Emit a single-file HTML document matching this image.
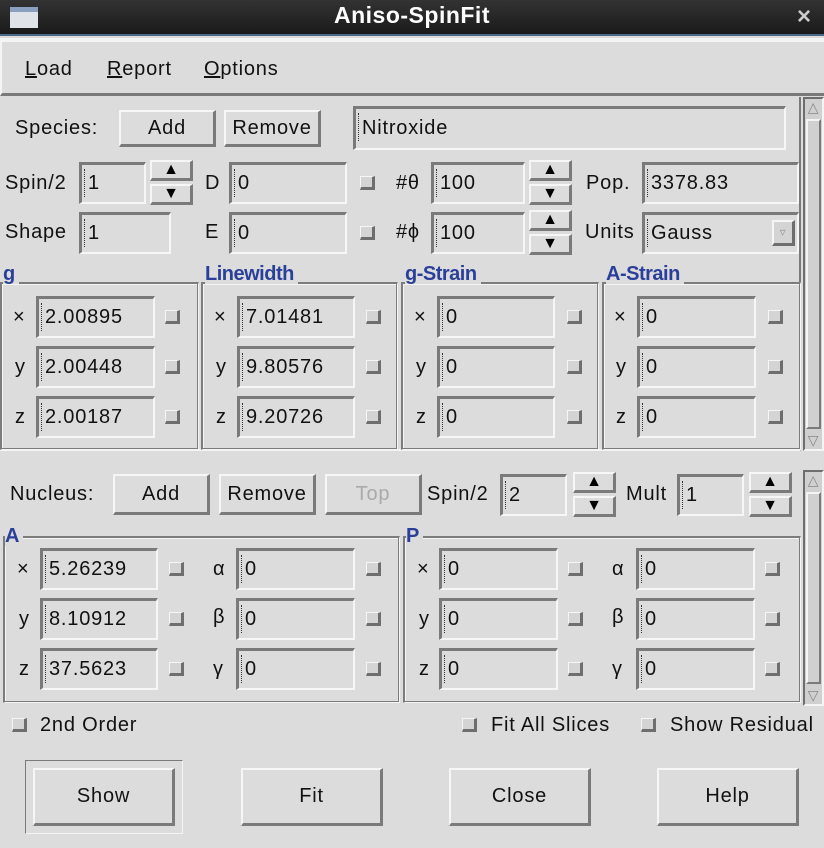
<!DOCTYPE html>
<html><head><meta charset="utf-8">
<style>
*{box-sizing:border-box;margin:0;padding:0}
body{width:824px;height:848px;overflow:hidden;background:#dcdcdc;font-family:"Liberation Sans","DejaVu Sans",sans-serif;font-size:20px;color:#111;position:relative;letter-spacing:0.8px}
div{position:absolute}
.t{background:linear-gradient(#333,#1a1a1a);left:0;top:0;width:824px;height:36px;border-bottom:2px solid #4a6a8a}
.f{border-style:solid;border-width:3px 2px 2px 3px;border-color:#7a7a7a #f6f6f6 #f6f6f6 #7a7a7a;height:42px;line-height:36px;padding-left:6px;white-space:nowrap;overflow:hidden}
.f:before{content:"";position:absolute;left:2px;top:4px;height:28px;border-left:1px dotted #333}
.b{border-style:solid;border-width:2px 3px 3px 2px;border-color:#f6f6f6 #7a7a7a #7a7a7a #f6f6f6;text-align:center;line-height:32px}
.c{width:15px;height:14px;border-style:solid;border-width:1px 3px 3px 1px;border-color:#f6f6f6 #6e6e6e #6e6e6e #f6f6f6;background:#d4d4d4}
.l{white-space:nowrap;line-height:24px}
.g{border-color:#7c7c7c #f4f4f4 #f4f4f4 #7c7c7c;border-style:solid;border-width:2px 1px 1px 2px;box-shadow:inset -1px -1px 0 #7c7c7c,inset 1px 1px 0 #f4f4f4}
.h{color:#2a3f9a;font-weight:bold;font-size:20px;background:#dcdcdc;padding-right:4px;line-height:20px;letter-spacing:-0.5px}
.ar{width:43px;height:21px;border-style:solid;border-width:2px 3px 3px 2px;border-color:#f6f6f6 #7a7a7a #7a7a7a #f6f6f6;text-align:center;font-size:16px;line-height:16px;color:#000;letter-spacing:0}
.sb{width:21px;border:2px solid;border-color:#6e6e6e #f4f4f4 #f4f4f4 #6e6e6e;background:#d0d0d0}
.sb div{left:1px;right:1px;top:20px;bottom:20px;border:2px solid;border-color:#f4f4f4 #7a7a7a #7a7a7a #f4f4f4}
.sb span{position:absolute;left:0;width:17px;text-align:center;font-size:14px;color:#888}
</style></head><body>
<div class="t"></div>
<div style="left:10px;top:7px;width:28px;height:21px;background:#e0e4e8;border-top:5px solid #8aa0c0"></div>
<div style="left:0;top:2px;width:824px;text-align:center;color:#fff;font-weight:bold;font-size:23px;letter-spacing:0.5px">Aniso-SpinFit</div>
<div style="left:797px;top:3px;color:#ccc;font-weight:bold;font-size:24px">×</div>
<div style="left:0;top:38px;width:824px;height:4px;background:#f4f4f4"></div>
<div style="left:0;top:42px;width:824px;height:54px;border-bottom:3px solid #7a7a7a;border-left:2px solid #f4f4f4"></div>
<div class="l" style="left:25px;top:57px"><u>L</u>oad</div>
<div class="l" style="left:107px;top:57px"><u>R</u>eport</div>
<div class="l" style="left:204px;top:57px"><u>O</u>ptions</div>

<div style="left:0;top:97px;width:801px;height:354px;border-right:2px solid #7a7a7a;border-bottom:2px solid #f4f4f4"></div>
<div class="sb" style="left:803px;top:97px;height:354px"><span style="top:0">△</span><div></div><span style="bottom:0">▽</span></div>
<div class="l" style="left:15px;top:116px">Species:</div>
<div class="b" style="left:119px;top:110px;width:97px;height:37px">Add</div>
<div class="b" style="left:224px;top:110px;width:97px;height:37px">Remove</div>
<div class="f" style="left:353px;top:106px;width:433px;height:44px;line-height:38px">Nitroxide</div>

<div class="l" style="left:5px;top:171px">Spin/2</div>
<div class="f" style="left:79px;top:162px;width:67px">1</div>
<div class="ar" style="left:150px;top:160px">▲</div><div class="ar" style="left:150px;top:184px">▼</div>
<div class="l" style="left:205px;top:171px">D</div>
<div class="f" style="left:229px;top:162px;width:118px">0</div>
<div class="c" style="left:360px;top:176px"></div>
<div class="l" style="left:396px;top:171px">#θ</div>
<div class="f" style="left:431px;top:162px;width:94px">100</div>
<div class="ar" style="left:529px;top:160px">▲</div><div class="ar" style="left:529px;top:184px">▼</div>
<div class="l" style="left:586px;top:171px">Pop.</div>
<div class="f" style="left:642px;top:162px;width:157px">3378.83</div>

<div class="l" style="left:5px;top:220px">Shape</div>
<div class="f" style="left:79px;top:212px;width:92px">1</div>
<div class="l" style="left:205px;top:220px">E</div>
<div class="f" style="left:229px;top:212px;width:118px">0</div>
<div class="c" style="left:360px;top:226px"></div>
<div class="l" style="left:396px;top:220px">#ϕ</div>
<div class="f" style="left:431px;top:212px;width:94px">100</div>
<div class="ar" style="left:529px;top:210px">▲</div><div class="ar" style="left:529px;top:234px">▼</div>
<div class="l" style="left:585px;top:220px">Units</div>
<div class="f" style="left:642px;top:212px;width:157px">Gauss</div>
<div class="c" style="left:772px;top:220px;width:23px;height:26px;border-width:2px 3px 3px 2px;font-size:12px;color:#999;text-align:center;line-height:20px">▿</div>

<div class="g" style="left:0;top:282px;width:199px;height:168px"></div>
<div class="g" style="left:201px;top:282px;width:197px;height:168px"></div>
<div class="g" style="left:401px;top:282px;width:198px;height:168px"></div>
<div class="g" style="left:602px;top:282px;width:199px;height:168px"></div>
<div class="h" style="left:3px;top:264px">g</div>
<div class="h" style="left:205px;top:264px">Linewidth</div>
<div class="h" style="left:405px;top:264px">g-Strain</div>
<div class="h" style="left:606px;top:264px">A-Strain</div>

<div class="l" style="left:13px;top:305px">×</div><div class="f" style="left:36px;top:296px;width:119px">2.00895</div><div class="c" style="left:165px;top:310px"></div>
<div class="l" style="left:15px;top:355px">y</div><div class="f" style="left:36px;top:346px;width:119px">2.00448</div><div class="c" style="left:165px;top:360px"></div>
<div class="l" style="left:15px;top:405px">z</div><div class="f" style="left:36px;top:396px;width:119px">2.00187</div><div class="c" style="left:165px;top:410px"></div>

<div class="l" style="left:214px;top:305px">×</div><div class="f" style="left:237px;top:296px;width:118px">7.01481</div><div class="c" style="left:366px;top:310px"></div>
<div class="l" style="left:216px;top:355px">y</div><div class="f" style="left:237px;top:346px;width:118px">9.80576</div><div class="c" style="left:366px;top:360px"></div>
<div class="l" style="left:216px;top:405px">z</div><div class="f" style="left:237px;top:396px;width:118px">9.20726</div><div class="c" style="left:366px;top:410px"></div>

<div class="l" style="left:414px;top:305px">×</div><div class="f" style="left:437px;top:296px;width:118px">0</div><div class="c" style="left:567px;top:310px"></div>
<div class="l" style="left:416px;top:355px">y</div><div class="f" style="left:437px;top:346px;width:118px">0</div><div class="c" style="left:567px;top:360px"></div>
<div class="l" style="left:416px;top:405px">z</div><div class="f" style="left:437px;top:396px;width:118px">0</div><div class="c" style="left:567px;top:410px"></div>

<div class="l" style="left:614px;top:305px">×</div><div class="f" style="left:637px;top:296px;width:119px">0</div><div class="c" style="left:768px;top:310px"></div>
<div class="l" style="left:616px;top:355px">y</div><div class="f" style="left:637px;top:346px;width:119px">0</div><div class="c" style="left:768px;top:360px"></div>
<div class="l" style="left:616px;top:405px">z</div><div class="f" style="left:637px;top:396px;width:119px">0</div><div class="c" style="left:768px;top:410px"></div>

<div class="sb" style="left:803px;top:470px;height:236px"><span style="top:0">△</span><div></div><span style="bottom:0">▽</span></div>
<div class="l" style="left:10px;top:482px">Nucleus:</div>
<div class="b" style="left:113px;top:474px;width:97px;height:41px;line-height:36px">Add</div>
<div class="b" style="left:219px;top:474px;width:97px;height:41px;line-height:36px">Remove</div>
<div class="b" style="left:325px;top:474px;width:97px;height:41px;line-height:36px;color:#aaa">Top</div>
<div class="l" style="left:427px;top:482px">Spin/2</div>
<div class="f" style="left:500px;top:474px;width:67px">2</div>
<div class="ar" style="left:573px;top:472px">▲</div><div class="ar" style="left:573px;top:496px">▼</div>
<div class="l" style="left:626px;top:482px">Mult</div>
<div class="f" style="left:677px;top:474px;width:67px">1</div>
<div class="ar" style="left:749px;top:472px">▲</div><div class="ar" style="left:749px;top:496px">▼</div>

<div class="g" style="left:3px;top:536px;width:397px;height:167px"></div>
<div class="g" style="left:403px;top:536px;width:398px;height:167px"></div>
<div class="h" style="left:5px;top:526px">A</div>
<div class="h" style="left:406px;top:526px">P</div>

<div class="l" style="left:17px;top:557px">×</div><div class="f" style="left:40px;top:548px;width:118px">5.26239</div><div class="c" style="left:169px;top:562px"></div>
<div class="l" style="left:19px;top:607px">y</div><div class="f" style="left:40px;top:598px;width:118px">8.10912</div><div class="c" style="left:169px;top:612px"></div>
<div class="l" style="left:19px;top:657px">z</div><div class="f" style="left:40px;top:648px;width:118px">37.5623</div><div class="c" style="left:169px;top:662px"></div>
<div class="l" style="left:213px;top:557px">α</div><div class="f" style="left:236px;top:548px;width:119px">0</div><div class="c" style="left:366px;top:562px"></div>
<div class="l" style="left:213px;top:605px">β</div><div class="f" style="left:236px;top:598px;width:119px">0</div><div class="c" style="left:366px;top:612px"></div>
<div class="l" style="left:213px;top:657px">γ</div><div class="f" style="left:236px;top:648px;width:119px">0</div><div class="c" style="left:366px;top:662px"></div>

<div class="l" style="left:417px;top:557px">×</div><div class="f" style="left:439px;top:548px;width:119px">0</div><div class="c" style="left:568px;top:562px"></div>
<div class="l" style="left:419px;top:607px">y</div><div class="f" style="left:439px;top:598px;width:119px">0</div><div class="c" style="left:568px;top:612px"></div>
<div class="l" style="left:419px;top:657px">z</div><div class="f" style="left:439px;top:648px;width:119px">0</div><div class="c" style="left:568px;top:662px"></div>
<div class="l" style="left:612px;top:557px">α</div><div class="f" style="left:636px;top:548px;width:119px">0</div><div class="c" style="left:765px;top:562px"></div>
<div class="l" style="left:612px;top:605px">β</div><div class="f" style="left:636px;top:598px;width:119px">0</div><div class="c" style="left:765px;top:612px"></div>
<div class="l" style="left:612px;top:657px">γ</div><div class="f" style="left:636px;top:648px;width:119px">0</div><div class="c" style="left:765px;top:662px"></div>

<div class="c" style="left:12px;top:718px"></div><div class="l" style="left:40px;top:713px">2nd Order</div>
<div class="c" style="left:462px;top:718px"></div><div class="l" style="left:491px;top:713px">Fit All Slices</div>
<div class="c" style="left:641px;top:718px"></div><div class="l" style="left:670px;top:713px">Show Residual</div>

<div style="left:25px;top:760px;width:158px;height:74px;border:1px solid #7a7a7a;border-right-color:#f4f4f4;border-bottom-color:#f4f4f4"></div>
<div class="b" style="left:33px;top:768px;width:142px;height:58px;line-height:52px">Show</div>
<div class="b" style="left:241px;top:768px;width:142px;height:58px;line-height:52px">Fit</div>
<div class="b" style="left:449px;top:768px;width:142px;height:58px;line-height:52px">Close</div>
<div class="b" style="left:657px;top:768px;width:142px;height:58px;line-height:52px">Help</div>
</body></html>
